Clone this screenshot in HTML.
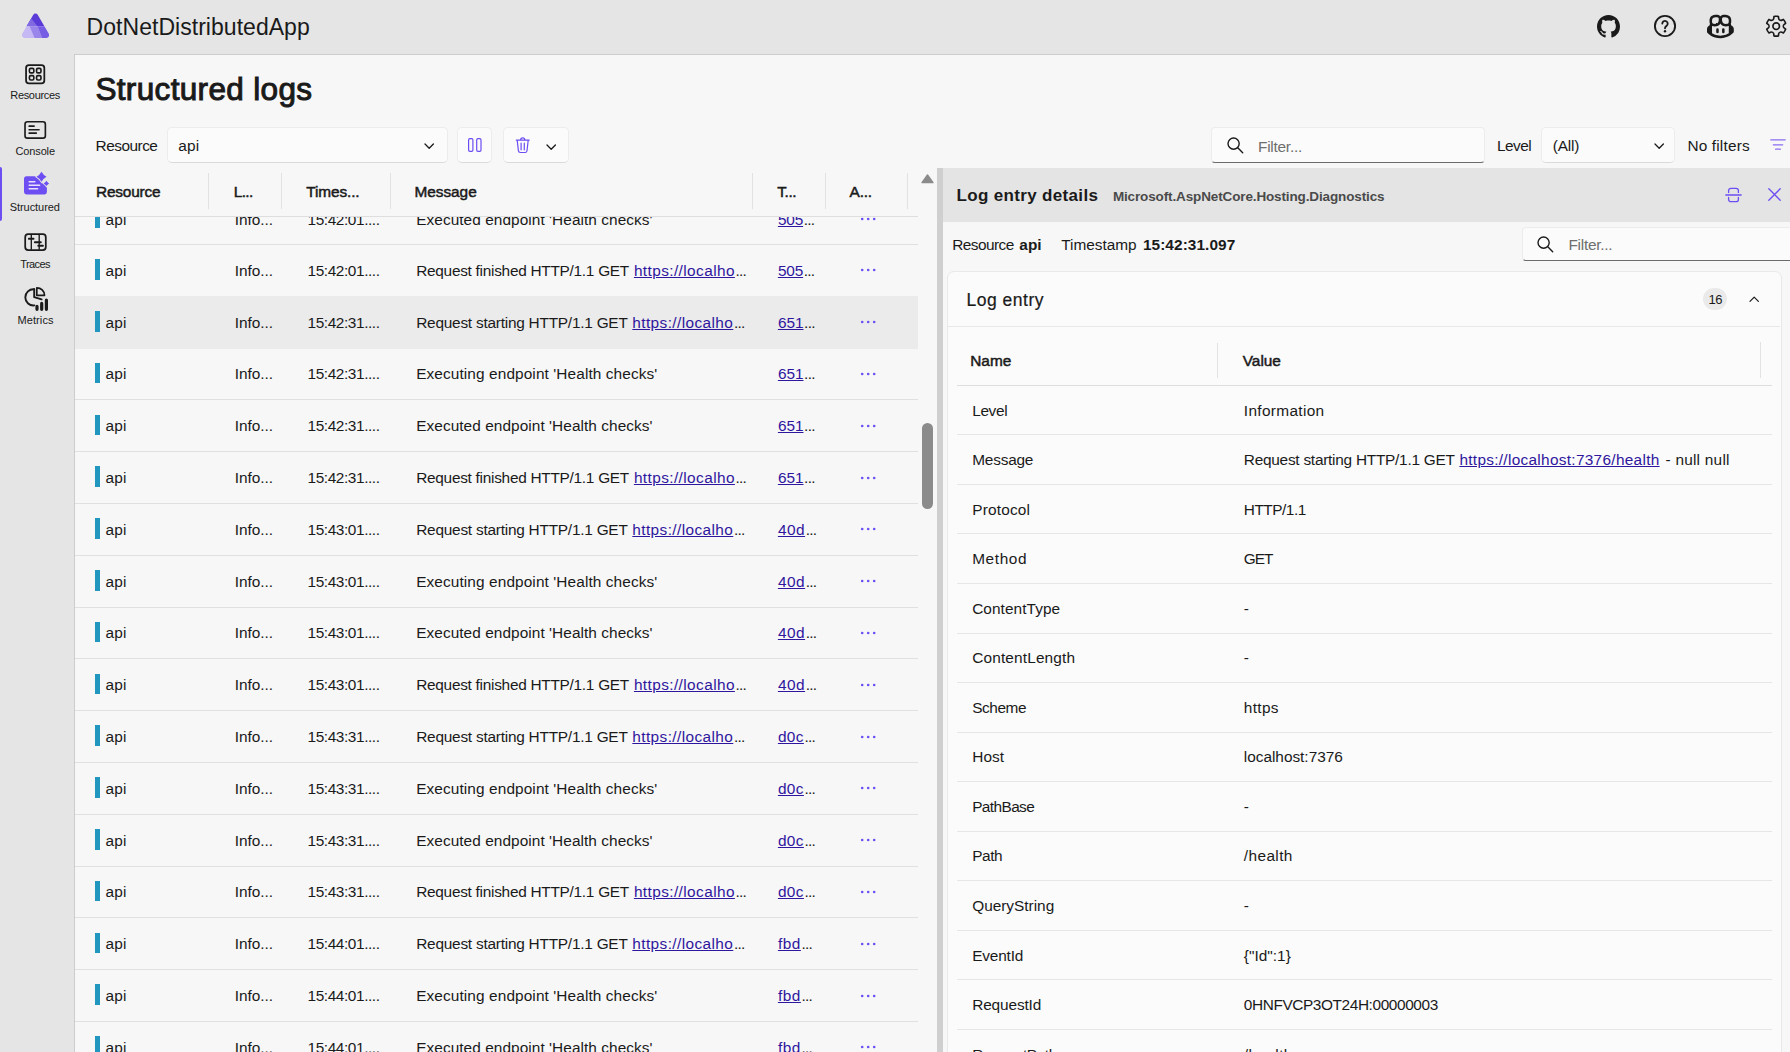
<!DOCTYPE html>
<html lang="en">
<head>
<meta charset="utf-8">
<title>DotNetDistributedApp - Structured logs</title>
<style>
html,body{margin:0;padding:0}
body{width:1790px;height:1052px;overflow:hidden;position:relative;background:#e5e5e5;font-family:"Liberation Sans",sans-serif;color:#1a1a1a}
div,svg,span.t{position:absolute;box-sizing:border-box}
header,nav,main,section,aside{display:block;margin:0;padding:0}
svg{overflow:visible}
.t{white-space:pre;line-height:20px;transform-origin:0 50%}
a{color:#2f169e;text-decoration:underline}
.hl{border-bottom:1px solid #e0e0e0}
.in{background:#fbfbfb;border:1px solid #ececec;border-bottom-color:#dadada;border-radius:5px}
.inb{border-bottom:1px solid #6b6b6b;border-radius:4px}
</style>
</head>
<body>
<header>
<svg style="left:15px;top:8px;" width="40" height="36" viewBox="0 0 40 36"><defs><clipPath id="lg"><path d="M18.16 6.95A2.7 2.7 0 0 1 22.84 6.95L33.76 25.85A2.7 2.7 0 0 1 31.42 29.90L9.58 29.90A2.7 2.7 0 0 1 7.24 25.85Z"/></clipPath></defs><g clip-path="url(#lg)"><rect x="0" y="0" width="40" height="18.2" fill="#5a3bd8"/><polygon points="0,18.2 0,11.3 16.9,11.3 22.5,18.2" fill="#8169e1"/><rect x="0" y="18.2" width="40" height="14" fill="#c5b8f4"/><polygon points="14.6,18.2 22.5,18.2 27.2,29.9 27.2,32 19.6,32 19.6,29.9" fill="#9a86ea"/><polygon points="22.5,18.2 40,18.2 40,32 27.2,32 27.2,29.9" fill="#775de3"/></g></svg>
<span class="t" style="left:86.6px;top:12.0px;font-size:23px;letter-spacing:0.037px;line-height:30px;">DotNetDistributedApp</span>
<svg style="left:1597.3px;top:15.1px;" width="23" height="23" viewBox="0 0 16 16"><path fill="#1a1a1a" d="M8 0C3.58 0 0 3.58 0 8c0 3.54 2.29 6.53 5.47 7.59.4.07.55-.17.55-.38 0-.19-.01-.82-.01-1.49-2.01.37-2.53-.49-2.69-.94-.09-.23-.48-.94-.82-1.13-.28-.15-.68-.52-.01-.53.63-.01 1.08.58 1.23.82.72 1.21 1.87.87 2.33.66.07-.52.28-.87.51-1.07-1.78-.2-3.64-.89-3.64-3.95 0-.87.31-1.59.82-2.15-.08-.2-.36-1.02.08-2.12 0 0 .67-.21 2.2.82.64-.18 1.32-.27 2-.27.68 0 1.36.09 2 .27 1.53-1.04 2.2-.82 2.2-.82.44 1.1.16 1.92.08 2.12.51.56.82 1.27.82 2.15 0 3.07-1.87 3.75-3.65 3.95.29.25.54.73.54 1.48 0 1.07-.01 1.93-.01 2.2 0 .21.15.46.55.38A8.013 8.013 0 0016 8c0-4.42-3.58-8-8-8z"/></svg>
<svg style="left:1652.5px;top:14px;" width="24" height="24" viewBox="0 0 24 24"><circle cx="12" cy="12" r="10.1" fill="none" stroke="#1a1a1a" stroke-width="1.9"/><path d="M9.3 9.6a2.7 2.7 0 1 1 4.3 2.2c-.9.7-1.6 1.3-1.6 2.5" fill="none" stroke="#1a1a1a" stroke-width="1.85" stroke-linecap="round"/><circle cx="12" cy="17.3" r="1.2" fill="#1a1a1a"/></svg>
<svg style="left:1707px;top:13.2px;" width="26.8" height="26.8" viewBox="0 0 16 16"><path fill="#1a1a1a" d="M7.998 15.035c-4.562 0-7.873-2.914-7.998-3.749V9.338c.085-.628.677-1.686 1.588-2.065.013-.07.024-.143.036-.218.029-.183.06-.384.126-.612-.201-.508-.254-1.084-.254-1.656 0-.87.128-1.769.693-2.484.579-.733 1.494-1.124 2.724-1.261 1.206-.134 2.262.034 2.944.765.05.053.096.108.139.165.044-.057.094-.112.143-.165.682-.731 1.738-.899 2.944-.765 1.23.137 2.145.528 2.724 1.261.566.715.693 1.614.693 2.484 0 .572-.053 1.148-.254 1.656.066.228.098.429.126.612.012.076.024.148.037.218.924.385 1.522 1.471 1.591 2.095v1.872c0 .766-3.351 3.795-8.002 3.795Zm0-1.485c2.28 0 4.584-1.11 5.002-1.433V7.862l-.023-.116c-.49.21-1.075.291-1.727.291-1.146 0-2.059-.327-2.71-.991A3.222 3.222 0 0 1 8 6.303a3.24 3.24 0 0 1-.544.743c-.65.664-1.563.991-2.71.991-.652 0-1.236-.081-1.727-.291l-.023.116v4.255c.419.323 2.722 1.433 5.002 1.433ZM6.762 2.83c-.193-.206-.637-.413-1.682-.297-1.019.113-1.479.404-1.713.7-.247.312-.369.789-.369 1.554 0 .793.129 1.171.308 1.371.162.181.519.379 1.442.379.853 0 1.339-.235 1.638-.54.315-.322.527-.827.617-1.553.117-.935-.037-1.395-.241-1.614Zm4.155-.297c-1.044-.116-1.488.091-1.681.297-.204.219-.359.679-.242 1.614.091.726.303 1.231.618 1.553.299.305.784.54 1.638.54.922 0 1.28-.198 1.442-.379.179-.2.308-.578.308-1.371 0-.765-.123-1.242-.37-1.554-.233-.296-.693-.587-1.713-.7Z"/><path fill="#1a1a1a" d="M6.25 9.037a.75.75 0 0 1 .75.75v1.501a.75.75 0 0 1-1.5 0V9.787a.75.75 0 0 1 .75-.75Zm4.25.75v1.501a.75.75 0 0 1-1.5 0V9.787a.75.75 0 0 1 1.5 0Z"/></svg>
<svg style="left:1763.3px;top:13.1px;" width="26.4" height="26.4" viewBox="0 0 24 24"><path fill="#1a1a1a" d="M12.01 2.25c.74 0 1.47.1 2.18.25.32.07.55.33.59.65l.17 1.53a1.38 1.38 0 0 0 1.92 1.11l1.4-.61a.75.75 0 0 1 .85.17 9.8 9.8 0 0 1 2.2 3.8c.1.3-.01.64-.27.83l-1.24.92a1.38 1.38 0 0 0 0 2.22l1.24.92c.26.19.37.52.27.83a9.8 9.8 0 0 1-2.2 3.8.75.75 0 0 1-.85.17l-1.4-.62a1.38 1.38 0 0 0-1.93 1.12l-.17 1.52a.75.75 0 0 1-.57.65 9.52 9.52 0 0 1-4.4 0 .75.75 0 0 1-.57-.65l-.17-1.52a1.38 1.38 0 0 0-1.93-1.11l-1.4.62a.75.75 0 0 1-.85-.18 9.8 9.8 0 0 1-2.2-3.8c-.1-.3.01-.64.27-.83l1.24-.92a1.38 1.38 0 0 0 0-2.22l-1.24-.92a.75.75 0 0 1-.28-.83 9.8 9.8 0 0 1 2.2-3.8.75.75 0 0 1 .85-.17l1.4.62a1.38 1.38 0 0 0 1.93-1.12l.17-1.53a.75.75 0 0 1 .58-.65c.72-.16 1.45-.24 2.2-.25Zm0 1.5c-.45 0-.9.04-1.35.12l-.11.98a2.88 2.88 0 0 1-4.02 2.33l-.9-.4A8.3 8.3 0 0 0 4.28 9.1l.8.59a2.88 2.88 0 0 1 0 4.64l-.8.59c.3.84.76 1.63 1.34 2.32l.91-.4a2.88 2.88 0 0 1 4.01 2.32l.11.99c.89.15 1.8.15 2.68 0l.11-.99a2.88 2.88 0 0 1 4.02-2.32l.9.4a8.3 8.3 0 0 0 1.35-2.32l-.8-.6a2.88 2.88 0 0 1 0-4.63l.8-.59a8.3 8.3 0 0 0-1.35-2.32l-.9.4a2.88 2.88 0 0 1-4.02-2.33l-.11-.98c-.44-.08-.88-.12-1.32-.12ZM12 8.25a3.75 3.75 0 1 1 0 7.5 3.75 3.75 0 0 1 0-7.5Zm0 1.5a2.25 2.25 0 1 0 0 4.5 2.25 2.25 0 0 0 0-4.5Z"/></svg>
</header>
<nav>
<svg style="left:22.3px;top:60.55px;" width="26.4" height="26.4" viewBox="0 0 24 24"><rect x="3.7" y="3.7" width="16.6" height="16.6" rx="2.6" fill="none" stroke="#1a1a1a" stroke-width="1.6"/><rect x="6.75" y="6.75" width="4" height="4" rx="1.25" fill="none" stroke="#1a1a1a" stroke-width="1.5"/><rect x="6.75" y="13.25" width="4" height="4" rx="1.25" fill="none" stroke="#1a1a1a" stroke-width="1.5"/><rect x="13.25" y="6.75" width="4" height="4" rx="1.25" fill="none" stroke="#1a1a1a" stroke-width="1.5"/><rect x="13.25" y="13.25" width="4" height="4" rx="1.25" fill="none" stroke="#1a1a1a" stroke-width="1.5"/></svg>
<span class="t" style="left:10.3px;top:84.5px;font-size:11px;letter-spacing:-0.331px;">Resources</span>
<svg style="left:22.4px;top:116.6px;" width="26.4" height="26.4" viewBox="0 0 24 24"><rect x="2.75" y="4.35" width="18.5" height="14.9" rx="2.2" fill="none" stroke="#1a1a1a" stroke-width="1.5"/><path d="M6.5 8.3h4.5M6.5 11.55h9M6.5 14.7h6.5" fill="none" stroke="#1a1a1a" stroke-width="1.5" stroke-linecap="round"/></svg>
<span class="t" style="left:15.5px;top:140.7px;font-size:11px;letter-spacing:-0.137px;">Console</span>
<div style="left:0px;top:167px;width:2.4px;height:54px;background:#6d4ef2;border-radius:0 2px 2px 0"></div>
<svg style="left:20px;top:168px;" width="32" height="32" viewBox="0 0 32 32"><path d="M6.5 8.2H15.6L26.9 19.6V24.0Q26.9 26.4 24.5 26.4H6.5Q4.0 26.4 4.0 24.0V10.7Q4.0 8.2 6.5 8.2Z" fill="#6d4ef2"/><path d="M21.50 3.80Q23.25 7.05 26.50 8.80Q23.25 10.55 21.50 13.80Q19.75 10.55 16.50 8.80Q19.75 7.05 21.50 3.80Z" fill="#6d4ef2" stroke="#e5e5e5" stroke-width="1.6" paint-order="stroke"/><path d="M26.40 12.70Q27.34 14.46 29.10 15.40Q27.34 16.34 26.40 18.10Q25.45 16.34 23.70 15.40Q25.45 14.46 26.40 12.70Z" fill="#6d4ef2" stroke="#e5e5e5" stroke-width="1.4" paint-order="stroke"/><path d="M9.2 13.7h5.6M9.2 17.3h10.4M9.2 20.7h8.4" stroke="#e8e2ff" stroke-width="1.5" stroke-linecap="round" fill="none"/></svg>
<span class="t" style="left:9.7px;top:196.7px;font-size:11px;letter-spacing:-0.055px;">Structured</span>
<svg style="left:20px;top:228px;" width="32" height="28" viewBox="0 0 32 28"><rect x="5.2" y="6.2" width="20.6" height="15.8" rx="3" fill="none" stroke="#1a1a1a" stroke-width="1.75"/><path d="M11.3 6.5v15.2M19.2 6.5v15.2" stroke="#1a1a1a" stroke-width="1.35" fill="none"/><path d="M8.9 10.8h4.6M14.9 14.3h5.9M18.3 17.8h4.6" stroke="#1a1a1a" stroke-width="2" stroke-linecap="round" fill="none"/><path d="M8.9 10.8h4.6M14.9 14.3h5.9M18.3 17.8h4.6" stroke="#e5e5e5" stroke-width="3.6" stroke-linecap="butt" fill="none" opacity="0"/></svg>
<span class="t" style="left:20.3px;top:253.8px;font-size:11px;letter-spacing:-0.603px;">Traces</span>
<svg style="left:20px;top:284px;" width="32" height="30" viewBox="0 0 32 30"><path d="M14.2 5.3A8.1 8.1 0 1 0 14.4 21.4" fill="none" stroke="#1a1a1a" stroke-width="1.9" stroke-linecap="round"/><path d="M14.2 5.3V13.2L21.6 15.4" fill="none" stroke="#1a1a1a" stroke-width="1.9" stroke-linecap="round" stroke-linejoin="round"/><path d="M16.8 3.8A7.6 7.6 0 0 1 24.5 11.3H16.8Z" fill="none" stroke="#1a1a1a" stroke-width="1.7" stroke-linejoin="round"/><path d="M17.0 22.4v2.9M21.7 19.4v5.9M26.4 16.0v9.3" fill="none" stroke="#1a1a1a" stroke-width="3.2" stroke-linecap="round"/></svg>
<span class="t" style="left:17.5px;top:309.9px;font-size:11px;letter-spacing:0.092px;">Metrics</span>
</nav>
<main>
<div style="left:74px;top:54px;width:1716px;height:998px;background:#f7f7f7;border-left:1px solid #cdcdcd;border-top:1px solid #cdcdcd"></div>
<section class="toolbar">
<span class="t" style="left:95.4px;top:68.6px;font-size:31.5px;-webkit-text-stroke:1.01px;letter-spacing:0.343px;line-height:40px;">Structured logs</span>
<span class="t" style="left:95.6px;top:136.0px;font-size:15.4px;letter-spacing:-0.509px;">Resource</span>
<div class="in" style="left:167.3px;top:127.3px;width:280.3px;height:35.3px;"></div>
<span class="t" style="left:178.3px;top:136.0px;font-size:15.4px;letter-spacing:0.218px;">api</span>
<svg style="left:424.4px;top:143.4px;" width="10.4" height="6.4" viewBox="0 0 10.4 6.4"><path d="M1 1l4.2 4.2L9.4 1" fill="none" stroke="#1a1a1a" stroke-width="1.3" stroke-linecap="round" stroke-linejoin="round"/></svg>
<div class="in" style="left:457.3px;top:127.3px;width:35px;height:35.3px;"></div>
<svg style="left:468.2px;top:137.9px;" width="14" height="14" viewBox="0 0 14 14"><rect x="0.6" y="0.6" width="4.3" height="12.7" rx="1.3" fill="none" stroke="#6d4ef2" stroke-width="1.2"/><rect x="8.7" y="0.6" width="4.3" height="12.7" rx="1.3" fill="none" stroke="#6d4ef2" stroke-width="1.2"/></svg>
<div class="in" style="left:502.6px;top:127.3px;width:66.9px;height:35.3px;"></div>
<svg style="left:515.3px;top:136.9px;" width="15.4" height="16.4" viewBox="0 0 15.4 16.4"><path d="M1.3 3.1h12.9M5.6 3.0a2.1 2.1 0 0 1 4.2 0M2.2 3.3l1.2 10.4a2 2 0 0 0 2 1.8h4.6a2 2 0 0 0 2-1.8l1.2-10.4M6.1 6.2v6.6M9.3 6.2v6.6" fill="none" stroke="#6d4ef2" stroke-width="1.2" stroke-linecap="round" stroke-linejoin="round"/></svg>
<svg style="left:546.4px;top:143.6px;" width="10.4" height="6.4" viewBox="0 0 10.4 6.4"><path d="M1 1l4.2 4.2L9.4 1" fill="none" stroke="#1a1a1a" stroke-width="1.3" stroke-linecap="round" stroke-linejoin="round"/></svg>
<div class="in inb" style="left:1211.4px;top:127.2px;width:273.6px;height:35.4px;"></div>
<svg style="left:1226.8px;top:137px;" width="16.4" height="16.4" viewBox="0 0 16.4 16.4"><circle cx="6.6" cy="6.6" r="5.6" fill="none" stroke="#1a1a1a" stroke-width="1.4"/><path d="M10.8 10.8l4.9 4.9" stroke="#1a1a1a" stroke-width="1.4" stroke-linecap="round"/></svg>
<span class="t" style="left:1258px;top:136.8px;font-size:15.4px;color:#6e6e6e;letter-spacing:-0.243px;">Filter...</span>
<span class="t" style="left:1497px;top:136.1px;font-size:15.4px;letter-spacing:-0.559px;">Level</span>
<div class="in" style="left:1541.4px;top:127.3px;width:134px;height:35.3px;"></div>
<span class="t" style="left:1552.8px;top:136.1px;font-size:15.4px;letter-spacing:-0.172px;">(All)</span>
<svg style="left:1653.5px;top:143.4px;" width="10.4" height="6.4" viewBox="0 0 10.4 6.4"><path d="M1 1l4.2 4.2L9.4 1" fill="none" stroke="#1a1a1a" stroke-width="1.3" stroke-linecap="round" stroke-linejoin="round"/></svg>
<span class="t" style="left:1687.4px;top:136.1px;font-size:15.4px;letter-spacing:0.167px;">No filters</span>
<svg style="left:1770.2px;top:139.2px;" width="16" height="12" viewBox="0 0 16 12"><path d="M0.8 0.8h14.4M3.3 5.8h9.4M5.6 10.2h4.8" stroke="#8a6df2" stroke-width="1.3" stroke-linecap="round" fill="none"/></svg>
</section>
<section class="grid">
<section class="row">
<div class="hl" style="left:75px;top:193.15px;width:843px;height:51.8px;"></div>
<div style="left:95px;top:207.35px;width:4.9px;height:20.7px;background:#2196bf"></div>
<span class="t" style="left:105.5px;top:209.95px;font-size:15.4px;letter-spacing:0.151px;">api</span>
<span class="t" style="left:234.8px;top:209.95px;font-size:15.4px;letter-spacing:-0.057px;">Info...</span>
<span class="t" style="left:307.5px;top:209.95px;font-size:15.4px;letter-spacing:-0.410px;">15:42:01....</span>
<span class="t" style="left:416.2px;top:209.95px;font-size:15.4px;letter-spacing:0.063px;">Executed endpoint 'Health checks'</span>
<span class="t" style="left:777.9px;top:209.95px;font-size:15.4px;letter-spacing:-0.163px;"><a>505</a></span>
<span class="t" style="left:803.7px;top:209.95px;font-size:15.4px;letter-spacing:-0.743px;">...</span>
<svg style="left:860px;top:216.55px;" width="16" height="4" viewBox="0 0 16 4"><circle cx="2.2" cy="2" r="1.3" fill="#6d4ef2"/><circle cx="8.2" cy="2" r="1.3" fill="#6d4ef2"/><circle cx="14.2" cy="2" r="1.3" fill="#6d4ef2"/></svg>
</section>
<section class="row">
<div class="hl" style="left:75px;top:244.95px;width:843px;height:51.8px;"></div>
<div style="left:95px;top:259.15px;width:4.9px;height:20.7px;background:#2196bf"></div>
<span class="t" style="left:105.5px;top:260.85px;font-size:15.4px;letter-spacing:0.151px;">api</span>
<span class="t" style="left:234.8px;top:260.85px;font-size:15.4px;letter-spacing:-0.057px;">Info...</span>
<span class="t" style="left:307.5px;top:260.85px;font-size:15.4px;letter-spacing:-0.410px;">15:42:01....</span>
<span class="t" style="left:416.2px;top:260.85px;font-size:15.4px;letter-spacing:-0.273px;">Request finished HTTP/1.1 GET</span>
<span class="t" style="left:633.9px;top:260.85px;font-size:15.4px;letter-spacing:0.402px;"><a>https://localho</a></span>
<span class="t" style="left:735.5px;top:260.85px;font-size:15.4px;letter-spacing:-0.743px;">...</span>
<span class="t" style="left:777.9px;top:260.85px;font-size:15.4px;letter-spacing:-0.163px;"><a>505</a></span>
<span class="t" style="left:803.7px;top:260.85px;font-size:15.4px;letter-spacing:-0.743px;">...</span>
<svg style="left:860px;top:268.35px;" width="16" height="4" viewBox="0 0 16 4"><circle cx="2.2" cy="2" r="1.3" fill="#6d4ef2"/><circle cx="8.2" cy="2" r="1.3" fill="#6d4ef2"/><circle cx="14.2" cy="2" r="1.3" fill="#6d4ef2"/></svg>
</section>
<section class="row">
<div style="left:75px;top:296px;width:843px;height:52.8px;background:#ebebeb"></div>
<div style="left:95px;top:310.95px;width:4.9px;height:20.7px;background:#2196bf"></div>
<span class="t" style="left:105.5px;top:312.65px;font-size:15.4px;letter-spacing:0.151px;">api</span>
<span class="t" style="left:234.8px;top:312.65px;font-size:15.4px;letter-spacing:-0.057px;">Info...</span>
<span class="t" style="left:307.5px;top:312.65px;font-size:15.4px;letter-spacing:-0.410px;">15:42:31....</span>
<span class="t" style="left:416.2px;top:312.65px;font-size:15.4px;letter-spacing:-0.232px;">Request starting HTTP/1.1 GET</span>
<span class="t" style="left:632.3px;top:312.65px;font-size:15.4px;letter-spacing:0.402px;"><a>https://localho</a></span>
<span class="t" style="left:733.9px;top:312.65px;font-size:15.4px;letter-spacing:-0.743px;">...</span>
<span class="t" style="left:777.9px;top:312.65px;font-size:15.4px;letter-spacing:-0.029px;"><a>651</a></span>
<span class="t" style="left:804.1px;top:312.65px;font-size:15.4px;letter-spacing:-0.743px;">...</span>
<svg style="left:860px;top:320.15px;" width="16" height="4" viewBox="0 0 16 4"><circle cx="2.2" cy="2" r="1.3" fill="#6d4ef2"/><circle cx="8.2" cy="2" r="1.3" fill="#6d4ef2"/><circle cx="14.2" cy="2" r="1.3" fill="#6d4ef2"/></svg>
</section>
<section class="row">
<div class="hl" style="left:75px;top:348.55px;width:843px;height:51.8px;"></div>
<div style="left:95px;top:362.75px;width:4.9px;height:20.7px;background:#2196bf"></div>
<span class="t" style="left:105.5px;top:364.45px;font-size:15.4px;letter-spacing:0.151px;">api</span>
<span class="t" style="left:234.8px;top:364.45px;font-size:15.4px;letter-spacing:-0.057px;">Info...</span>
<span class="t" style="left:307.5px;top:364.45px;font-size:15.4px;letter-spacing:-0.410px;">15:42:31....</span>
<span class="t" style="left:416.2px;top:364.45px;font-size:15.4px;letter-spacing:0.101px;">Executing endpoint 'Health checks'</span>
<span class="t" style="left:777.9px;top:364.45px;font-size:15.4px;letter-spacing:-0.029px;"><a>651</a></span>
<span class="t" style="left:804.1px;top:364.45px;font-size:15.4px;letter-spacing:-0.743px;">...</span>
<svg style="left:860px;top:371.95px;" width="16" height="4" viewBox="0 0 16 4"><circle cx="2.2" cy="2" r="1.3" fill="#6d4ef2"/><circle cx="8.2" cy="2" r="1.3" fill="#6d4ef2"/><circle cx="14.2" cy="2" r="1.3" fill="#6d4ef2"/></svg>
</section>
<section class="row">
<div class="hl" style="left:75px;top:400.35px;width:843px;height:51.8px;"></div>
<div style="left:95px;top:414.55px;width:4.9px;height:20.7px;background:#2196bf"></div>
<span class="t" style="left:105.5px;top:416.25px;font-size:15.4px;letter-spacing:0.151px;">api</span>
<span class="t" style="left:234.8px;top:416.25px;font-size:15.4px;letter-spacing:-0.057px;">Info...</span>
<span class="t" style="left:307.5px;top:416.25px;font-size:15.4px;letter-spacing:-0.410px;">15:42:31....</span>
<span class="t" style="left:416.2px;top:416.25px;font-size:15.4px;letter-spacing:0.063px;">Executed endpoint 'Health checks'</span>
<span class="t" style="left:777.9px;top:416.25px;font-size:15.4px;letter-spacing:-0.029px;"><a>651</a></span>
<span class="t" style="left:804.1px;top:416.25px;font-size:15.4px;letter-spacing:-0.743px;">...</span>
<svg style="left:860px;top:423.75px;" width="16" height="4" viewBox="0 0 16 4"><circle cx="2.2" cy="2" r="1.3" fill="#6d4ef2"/><circle cx="8.2" cy="2" r="1.3" fill="#6d4ef2"/><circle cx="14.2" cy="2" r="1.3" fill="#6d4ef2"/></svg>
</section>
<section class="row">
<div class="hl" style="left:75px;top:452.15px;width:843px;height:51.8px;"></div>
<div style="left:95px;top:466.35px;width:4.9px;height:20.7px;background:#2196bf"></div>
<span class="t" style="left:105.5px;top:468.05px;font-size:15.4px;letter-spacing:0.151px;">api</span>
<span class="t" style="left:234.8px;top:468.05px;font-size:15.4px;letter-spacing:-0.057px;">Info...</span>
<span class="t" style="left:307.5px;top:468.05px;font-size:15.4px;letter-spacing:-0.410px;">15:42:31....</span>
<span class="t" style="left:416.2px;top:468.05px;font-size:15.4px;letter-spacing:-0.273px;">Request finished HTTP/1.1 GET</span>
<span class="t" style="left:633.9px;top:468.05px;font-size:15.4px;letter-spacing:0.402px;"><a>https://localho</a></span>
<span class="t" style="left:735.5px;top:468.05px;font-size:15.4px;letter-spacing:-0.743px;">...</span>
<span class="t" style="left:777.9px;top:468.05px;font-size:15.4px;letter-spacing:-0.029px;"><a>651</a></span>
<span class="t" style="left:804.1px;top:468.05px;font-size:15.4px;letter-spacing:-0.743px;">...</span>
<svg style="left:860px;top:475.55px;" width="16" height="4" viewBox="0 0 16 4"><circle cx="2.2" cy="2" r="1.3" fill="#6d4ef2"/><circle cx="8.2" cy="2" r="1.3" fill="#6d4ef2"/><circle cx="14.2" cy="2" r="1.3" fill="#6d4ef2"/></svg>
</section>
<section class="row">
<div class="hl" style="left:75px;top:503.95px;width:843px;height:51.8px;"></div>
<div style="left:95px;top:518.15px;width:4.9px;height:20.7px;background:#2196bf"></div>
<span class="t" style="left:105.5px;top:519.85px;font-size:15.4px;letter-spacing:0.151px;">api</span>
<span class="t" style="left:234.8px;top:519.85px;font-size:15.4px;letter-spacing:-0.057px;">Info...</span>
<span class="t" style="left:307.5px;top:519.85px;font-size:15.4px;letter-spacing:-0.410px;">15:43:01....</span>
<span class="t" style="left:416.2px;top:519.85px;font-size:15.4px;letter-spacing:-0.232px;">Request starting HTTP/1.1 GET</span>
<span class="t" style="left:632.3px;top:519.85px;font-size:15.4px;letter-spacing:0.402px;"><a>https://localho</a></span>
<span class="t" style="left:733.9px;top:519.85px;font-size:15.4px;letter-spacing:-0.743px;">...</span>
<span class="t" style="left:777.9px;top:519.85px;font-size:15.4px;letter-spacing:0.504px;"><a>40d</a></span>
<span class="t" style="left:805.7px;top:519.85px;font-size:15.4px;letter-spacing:-0.743px;">...</span>
<svg style="left:860px;top:527.35px;" width="16" height="4" viewBox="0 0 16 4"><circle cx="2.2" cy="2" r="1.3" fill="#6d4ef2"/><circle cx="8.2" cy="2" r="1.3" fill="#6d4ef2"/><circle cx="14.2" cy="2" r="1.3" fill="#6d4ef2"/></svg>
</section>
<section class="row">
<div class="hl" style="left:75px;top:555.75px;width:843px;height:51.8px;"></div>
<div style="left:95px;top:569.95px;width:4.9px;height:20.7px;background:#2196bf"></div>
<span class="t" style="left:105.5px;top:571.65px;font-size:15.4px;letter-spacing:0.151px;">api</span>
<span class="t" style="left:234.8px;top:571.65px;font-size:15.4px;letter-spacing:-0.057px;">Info...</span>
<span class="t" style="left:307.5px;top:571.65px;font-size:15.4px;letter-spacing:-0.410px;">15:43:01....</span>
<span class="t" style="left:416.2px;top:571.65px;font-size:15.4px;letter-spacing:0.101px;">Executing endpoint 'Health checks'</span>
<span class="t" style="left:777.9px;top:571.65px;font-size:15.4px;letter-spacing:0.504px;"><a>40d</a></span>
<span class="t" style="left:805.7px;top:571.65px;font-size:15.4px;letter-spacing:-0.743px;">...</span>
<svg style="left:860px;top:579.15px;" width="16" height="4" viewBox="0 0 16 4"><circle cx="2.2" cy="2" r="1.3" fill="#6d4ef2"/><circle cx="8.2" cy="2" r="1.3" fill="#6d4ef2"/><circle cx="14.2" cy="2" r="1.3" fill="#6d4ef2"/></svg>
</section>
<section class="row">
<div class="hl" style="left:75px;top:607.55px;width:843px;height:51.8px;"></div>
<div style="left:95px;top:621.75px;width:4.9px;height:20.7px;background:#2196bf"></div>
<span class="t" style="left:105.5px;top:623.45px;font-size:15.4px;letter-spacing:0.151px;">api</span>
<span class="t" style="left:234.8px;top:623.45px;font-size:15.4px;letter-spacing:-0.057px;">Info...</span>
<span class="t" style="left:307.5px;top:623.45px;font-size:15.4px;letter-spacing:-0.410px;">15:43:01....</span>
<span class="t" style="left:416.2px;top:623.45px;font-size:15.4px;letter-spacing:0.063px;">Executed endpoint 'Health checks'</span>
<span class="t" style="left:777.9px;top:623.45px;font-size:15.4px;letter-spacing:0.504px;"><a>40d</a></span>
<span class="t" style="left:805.7px;top:623.45px;font-size:15.4px;letter-spacing:-0.743px;">...</span>
<svg style="left:860px;top:630.95px;" width="16" height="4" viewBox="0 0 16 4"><circle cx="2.2" cy="2" r="1.3" fill="#6d4ef2"/><circle cx="8.2" cy="2" r="1.3" fill="#6d4ef2"/><circle cx="14.2" cy="2" r="1.3" fill="#6d4ef2"/></svg>
</section>
<section class="row">
<div class="hl" style="left:75px;top:659.35px;width:843px;height:51.8px;"></div>
<div style="left:95px;top:673.55px;width:4.9px;height:20.7px;background:#2196bf"></div>
<span class="t" style="left:105.5px;top:675.25px;font-size:15.4px;letter-spacing:0.151px;">api</span>
<span class="t" style="left:234.8px;top:675.25px;font-size:15.4px;letter-spacing:-0.057px;">Info...</span>
<span class="t" style="left:307.5px;top:675.25px;font-size:15.4px;letter-spacing:-0.410px;">15:43:01....</span>
<span class="t" style="left:416.2px;top:675.25px;font-size:15.4px;letter-spacing:-0.273px;">Request finished HTTP/1.1 GET</span>
<span class="t" style="left:633.9px;top:675.25px;font-size:15.4px;letter-spacing:0.402px;"><a>https://localho</a></span>
<span class="t" style="left:735.5px;top:675.25px;font-size:15.4px;letter-spacing:-0.743px;">...</span>
<span class="t" style="left:777.9px;top:675.25px;font-size:15.4px;letter-spacing:0.504px;"><a>40d</a></span>
<span class="t" style="left:805.7px;top:675.25px;font-size:15.4px;letter-spacing:-0.743px;">...</span>
<svg style="left:860px;top:682.75px;" width="16" height="4" viewBox="0 0 16 4"><circle cx="2.2" cy="2" r="1.3" fill="#6d4ef2"/><circle cx="8.2" cy="2" r="1.3" fill="#6d4ef2"/><circle cx="14.2" cy="2" r="1.3" fill="#6d4ef2"/></svg>
</section>
<section class="row">
<div class="hl" style="left:75px;top:711.15px;width:843px;height:51.8px;"></div>
<div style="left:95px;top:725.35px;width:4.9px;height:20.7px;background:#2196bf"></div>
<span class="t" style="left:105.5px;top:727.05px;font-size:15.4px;letter-spacing:0.151px;">api</span>
<span class="t" style="left:234.8px;top:727.05px;font-size:15.4px;letter-spacing:-0.057px;">Info...</span>
<span class="t" style="left:307.5px;top:727.05px;font-size:15.4px;letter-spacing:-0.410px;">15:43:31....</span>
<span class="t" style="left:416.2px;top:727.05px;font-size:15.4px;letter-spacing:-0.232px;">Request starting HTTP/1.1 GET</span>
<span class="t" style="left:632.3px;top:727.05px;font-size:15.4px;letter-spacing:0.402px;"><a>https://localho</a></span>
<span class="t" style="left:733.9px;top:727.05px;font-size:15.4px;letter-spacing:-0.743px;">...</span>
<span class="t" style="left:777.9px;top:727.05px;font-size:15.4px;letter-spacing:0.391px;"><a>d0c</a></span>
<span class="t" style="left:804.5px;top:727.05px;font-size:15.4px;letter-spacing:-0.743px;">...</span>
<svg style="left:860px;top:734.55px;" width="16" height="4" viewBox="0 0 16 4"><circle cx="2.2" cy="2" r="1.3" fill="#6d4ef2"/><circle cx="8.2" cy="2" r="1.3" fill="#6d4ef2"/><circle cx="14.2" cy="2" r="1.3" fill="#6d4ef2"/></svg>
</section>
<section class="row">
<div class="hl" style="left:75px;top:762.95px;width:843px;height:51.8px;"></div>
<div style="left:95px;top:777.15px;width:4.9px;height:20.7px;background:#2196bf"></div>
<span class="t" style="left:105.5px;top:778.85px;font-size:15.4px;letter-spacing:0.151px;">api</span>
<span class="t" style="left:234.8px;top:778.85px;font-size:15.4px;letter-spacing:-0.057px;">Info...</span>
<span class="t" style="left:307.5px;top:778.85px;font-size:15.4px;letter-spacing:-0.410px;">15:43:31....</span>
<span class="t" style="left:416.2px;top:778.85px;font-size:15.4px;letter-spacing:0.101px;">Executing endpoint 'Health checks'</span>
<span class="t" style="left:777.9px;top:778.85px;font-size:15.4px;letter-spacing:0.391px;"><a>d0c</a></span>
<span class="t" style="left:804.5px;top:778.85px;font-size:15.4px;letter-spacing:-0.743px;">...</span>
<svg style="left:860px;top:786.35px;" width="16" height="4" viewBox="0 0 16 4"><circle cx="2.2" cy="2" r="1.3" fill="#6d4ef2"/><circle cx="8.2" cy="2" r="1.3" fill="#6d4ef2"/><circle cx="14.2" cy="2" r="1.3" fill="#6d4ef2"/></svg>
</section>
<section class="row">
<div class="hl" style="left:75px;top:814.75px;width:843px;height:51.8px;"></div>
<div style="left:95px;top:828.95px;width:4.9px;height:20.7px;background:#2196bf"></div>
<span class="t" style="left:105.5px;top:830.65px;font-size:15.4px;letter-spacing:0.151px;">api</span>
<span class="t" style="left:234.8px;top:830.65px;font-size:15.4px;letter-spacing:-0.057px;">Info...</span>
<span class="t" style="left:307.5px;top:830.65px;font-size:15.4px;letter-spacing:-0.410px;">15:43:31....</span>
<span class="t" style="left:416.2px;top:830.65px;font-size:15.4px;letter-spacing:0.063px;">Executed endpoint 'Health checks'</span>
<span class="t" style="left:777.9px;top:830.65px;font-size:15.4px;letter-spacing:0.391px;"><a>d0c</a></span>
<span class="t" style="left:804.5px;top:830.65px;font-size:15.4px;letter-spacing:-0.743px;">...</span>
<svg style="left:860px;top:838.15px;" width="16" height="4" viewBox="0 0 16 4"><circle cx="2.2" cy="2" r="1.3" fill="#6d4ef2"/><circle cx="8.2" cy="2" r="1.3" fill="#6d4ef2"/><circle cx="14.2" cy="2" r="1.3" fill="#6d4ef2"/></svg>
</section>
<section class="row">
<div class="hl" style="left:75px;top:866.55px;width:843px;height:51.8px;"></div>
<div style="left:95px;top:880.75px;width:4.9px;height:20.7px;background:#2196bf"></div>
<span class="t" style="left:105.5px;top:882.45px;font-size:15.4px;letter-spacing:0.151px;">api</span>
<span class="t" style="left:234.8px;top:882.45px;font-size:15.4px;letter-spacing:-0.057px;">Info...</span>
<span class="t" style="left:307.5px;top:882.45px;font-size:15.4px;letter-spacing:-0.410px;">15:43:31....</span>
<span class="t" style="left:416.2px;top:882.45px;font-size:15.4px;letter-spacing:-0.273px;">Request finished HTTP/1.1 GET</span>
<span class="t" style="left:633.9px;top:882.45px;font-size:15.4px;letter-spacing:0.402px;"><a>https://localho</a></span>
<span class="t" style="left:735.5px;top:882.45px;font-size:15.4px;letter-spacing:-0.743px;">...</span>
<span class="t" style="left:777.9px;top:882.45px;font-size:15.4px;letter-spacing:0.391px;"><a>d0c</a></span>
<span class="t" style="left:804.5px;top:882.45px;font-size:15.4px;letter-spacing:-0.743px;">...</span>
<svg style="left:860px;top:889.95px;" width="16" height="4" viewBox="0 0 16 4"><circle cx="2.2" cy="2" r="1.3" fill="#6d4ef2"/><circle cx="8.2" cy="2" r="1.3" fill="#6d4ef2"/><circle cx="14.2" cy="2" r="1.3" fill="#6d4ef2"/></svg>
</section>
<section class="row">
<div class="hl" style="left:75px;top:918.35px;width:843px;height:51.8px;"></div>
<div style="left:95px;top:932.55px;width:4.9px;height:20.7px;background:#2196bf"></div>
<span class="t" style="left:105.5px;top:934.25px;font-size:15.4px;letter-spacing:0.151px;">api</span>
<span class="t" style="left:234.8px;top:934.25px;font-size:15.4px;letter-spacing:-0.057px;">Info...</span>
<span class="t" style="left:307.5px;top:934.25px;font-size:15.4px;letter-spacing:-0.410px;">15:44:01....</span>
<span class="t" style="left:416.2px;top:934.25px;font-size:15.4px;letter-spacing:-0.232px;">Request starting HTTP/1.1 GET</span>
<span class="t" style="left:632.3px;top:934.25px;font-size:15.4px;letter-spacing:0.402px;"><a>https://localho</a></span>
<span class="t" style="left:733.9px;top:934.25px;font-size:15.4px;letter-spacing:-0.743px;">...</span>
<span class="t" style="left:777.9px;top:934.25px;font-size:15.4px;letter-spacing:0.531px;"><a>fbd</a></span>
<span class="t" style="left:801.5px;top:934.25px;font-size:15.4px;letter-spacing:-0.743px;">...</span>
<svg style="left:860px;top:941.75px;" width="16" height="4" viewBox="0 0 16 4"><circle cx="2.2" cy="2" r="1.3" fill="#6d4ef2"/><circle cx="8.2" cy="2" r="1.3" fill="#6d4ef2"/><circle cx="14.2" cy="2" r="1.3" fill="#6d4ef2"/></svg>
</section>
<section class="row">
<div class="hl" style="left:75px;top:970.15px;width:843px;height:51.8px;"></div>
<div style="left:95px;top:984.35px;width:4.9px;height:20.7px;background:#2196bf"></div>
<span class="t" style="left:105.5px;top:986.05px;font-size:15.4px;letter-spacing:0.151px;">api</span>
<span class="t" style="left:234.8px;top:986.05px;font-size:15.4px;letter-spacing:-0.057px;">Info...</span>
<span class="t" style="left:307.5px;top:986.05px;font-size:15.4px;letter-spacing:-0.410px;">15:44:01....</span>
<span class="t" style="left:416.2px;top:986.05px;font-size:15.4px;letter-spacing:0.101px;">Executing endpoint 'Health checks'</span>
<span class="t" style="left:777.9px;top:986.05px;font-size:15.4px;letter-spacing:0.531px;"><a>fbd</a></span>
<span class="t" style="left:801.5px;top:986.05px;font-size:15.4px;letter-spacing:-0.743px;">...</span>
<svg style="left:860px;top:993.55px;" width="16" height="4" viewBox="0 0 16 4"><circle cx="2.2" cy="2" r="1.3" fill="#6d4ef2"/><circle cx="8.2" cy="2" r="1.3" fill="#6d4ef2"/><circle cx="14.2" cy="2" r="1.3" fill="#6d4ef2"/></svg>
</section>
<section class="row">
<div class="hl" style="left:75px;top:1021.95px;width:843px;height:51.8px;"></div>
<div style="left:95px;top:1036.15px;width:4.9px;height:20.7px;background:#2196bf"></div>
<span class="t" style="left:105.5px;top:1037.85px;font-size:15.4px;letter-spacing:0.151px;">api</span>
<span class="t" style="left:234.8px;top:1037.85px;font-size:15.4px;letter-spacing:-0.057px;">Info...</span>
<span class="t" style="left:307.5px;top:1037.85px;font-size:15.4px;letter-spacing:-0.410px;">15:44:01....</span>
<span class="t" style="left:416.2px;top:1037.85px;font-size:15.4px;letter-spacing:0.063px;">Executed endpoint 'Health checks'</span>
<span class="t" style="left:777.9px;top:1037.85px;font-size:15.4px;letter-spacing:0.531px;"><a>fbd</a></span>
<span class="t" style="left:801.5px;top:1037.85px;font-size:15.4px;letter-spacing:-0.743px;">...</span>
<svg style="left:860px;top:1045.35px;" width="16" height="4" viewBox="0 0 16 4"><circle cx="2.2" cy="2" r="1.3" fill="#6d4ef2"/><circle cx="8.2" cy="2" r="1.3" fill="#6d4ef2"/><circle cx="14.2" cy="2" r="1.3" fill="#6d4ef2"/></svg>
</section>
<div style="left:75px;top:168px;width:860px;height:48.5px;background:#f7f7f7;border-bottom:1px solid #dedede;z-index:2"></div>
<div style="left:208.2px;top:173px;width:1px;height:36px;background:#e2e2e2;z-index:3"></div>
<div style="left:281.1px;top:173px;width:1px;height:36px;background:#e2e2e2;z-index:3"></div>
<div style="left:390.1px;top:173px;width:1px;height:36px;background:#e2e2e2;z-index:3"></div>
<div style="left:751.9px;top:173px;width:1px;height:36px;background:#e2e2e2;z-index:3"></div>
<div style="left:825.1px;top:173px;width:1px;height:36px;background:#e2e2e2;z-index:3"></div>
<div style="left:906.9px;top:173px;width:1px;height:36px;background:#e2e2e2;z-index:3"></div>
<span class="t" style="left:96px;top:182.0px;font-size:15.4px;-webkit-text-stroke:0.49px;z-index:3;letter-spacing:-0.197px;">Resource</span>
<span class="t" style="left:233.8px;top:182.0px;font-size:15.4px;-webkit-text-stroke:0.49px;z-index:3;letter-spacing:-0.648px;">L...</span>
<span class="t" style="left:306.2px;top:182.0px;font-size:15.4px;-webkit-text-stroke:0.49px;z-index:3;letter-spacing:-0.107px;">Times...</span>
<span class="t" style="left:414.4px;top:182.0px;font-size:15.4px;-webkit-text-stroke:0.49px;z-index:3;letter-spacing:-0.022px;">Message</span>
<span class="t" style="left:777.2px;top:182.0px;font-size:15.4px;-webkit-text-stroke:0.49px;z-index:3;letter-spacing:-0.358px;">T...</span>
<span class="t" style="left:849.6px;top:182.0px;font-size:15.4px;-webkit-text-stroke:0.49px;z-index:3;letter-spacing:-0.198px;">A...</span>
<div style="left:918px;top:168px;width:19px;height:884px;background:#f7f7f7;z-index:3"></div>
<svg style="left:921px;top:174px;z-index:4" width="13" height="10" viewBox="0 0 13 10"><path d="M6.5 1L12 8.6H1Z" fill="#8b8b8b" stroke="#8b8b8b" stroke-width="1.4" stroke-linejoin="round"/></svg>
<div style="left:922px;top:423px;width:11px;height:86px;background:#8b8b8b;border-radius:5.5px;z-index:4"></div>
<div style="left:937px;top:168px;width:6.2px;height:884px;background:#cfcfcf"></div>
</section>
<aside>
<div style="left:943.2px;top:168px;width:846.8px;height:54px;background:#e4e4e4"></div>
<span class="t" style="left:956.5px;top:185.8px;font-size:17px;font-weight:700;letter-spacing:0.339px;">Log entry details</span>
<span class="t" style="left:1112.9px;top:187.3px;font-size:13.5px;font-weight:700;color:#4a4a4a;letter-spacing:-0.132px;">Microsoft.AspNetCore.Hosting.Diagnostics</span>
<svg style="left:1724.5px;top:186.5px;" width="17" height="16" viewBox="0 0 17 16"><path d="M0.8 8h15.4M3.6 5.6V3.6a2.3 2.3 0 0 1 2.3-2.3h5.2a2.3 2.3 0 0 1 2.3 2.3v2M3.6 10.4v2a2.3 2.3 0 0 0 2.3 2.3h5.2a2.3 2.3 0 0 0 2.3-2.3v-2" fill="none" stroke="#6d4ef2" stroke-width="1.3" stroke-linecap="round"/></svg>
<svg style="left:1767.5px;top:188.3px;" width="13" height="13" viewBox="0 0 13 13"><path d="M0.8 0.8l11.4 11.4M12.2 0.8L0.8 12.2" stroke="#6d4ef2" stroke-width="1.3" stroke-linecap="round"/></svg>
<span class="t" style="left:952.3px;top:234.8px;font-size:15.4px;letter-spacing:-0.559px;">Resource</span>
<span class="t" style="left:1019.3px;top:234.8px;font-size:15.4px;font-weight:700;letter-spacing:0.050px;">api</span>
<span class="t" style="left:1061.3px;top:234.8px;font-size:15.4px;letter-spacing:-0.027px;">Timestamp</span>
<span class="t" style="left:1142.9px;top:234.8px;font-size:15.4px;font-weight:700;letter-spacing:0.078px;">15:42:31.097</span>
<div class="in inb" style="left:1522px;top:227px;width:290px;height:34.4px;"></div>
<svg style="left:1537px;top:236.2px;" width="16.4" height="16.4" viewBox="0 0 16.4 16.4"><circle cx="6.6" cy="6.6" r="5.6" fill="none" stroke="#1a1a1a" stroke-width="1.4"/><path d="M10.8 10.8l4.9 4.9" stroke="#1a1a1a" stroke-width="1.4" stroke-linecap="round"/></svg>
<span class="t" style="left:1568.4px;top:235.0px;font-size:15.4px;color:#6e6e6e;letter-spacing:-0.243px;">Filter...</span>
<div style="left:947.2px;top:271.2px;width:834.8px;height:800px;background:#fbfbfb;border:1px solid #e9e9e9;border-radius:7px"></div>
<div style="left:948.2px;top:326px;width:832.1px;height:1px;background:#e8e8e8"></div>
<span class="t" style="left:966.4px;top:289.8px;font-size:17.5px;-webkit-text-stroke:0.21px;letter-spacing:0.515px;">Log entry</span>
<div style="left:1703.1px;top:287.8px;width:23.8px;height:22.2px;background:#eaeaea;border-radius:11.5px"></div>
<span class="t" style="left:1708.4px;top:290.0px;font-size:13px;letter-spacing:-0.434px;">16</span>
<svg style="left:1748.5px;top:295.8px;" width="10.4" height="6.4" viewBox="0 0 10.4 6.4"><path d="M1 5.4l4.2-4.2 4.2 4.2" fill="none" stroke="#1a1a1a" stroke-width="1.2" stroke-linecap="round" stroke-linejoin="round"/></svg>
<div style="left:1217px;top:342.5px;width:1px;height:35px;background:#e2e2e2"></div>
<div style="left:1760px;top:342px;width:1px;height:35.5px;background:#e2e2e2"></div>
<span class="t" style="left:970.2px;top:351.0px;font-size:15.4px;-webkit-text-stroke:0.49px;letter-spacing:0.059px;">Name</span>
<span class="t" style="left:1242.8px;top:351.0px;font-size:15.4px;-webkit-text-stroke:0.49px;letter-spacing:-0.047px;">Value</span>
<div style="left:957.4px;top:385px;width:814.6px;height:1px;background:#dedede"></div>
<span class="t" style="left:972.2px;top:400.8px;font-size:15.4px;letter-spacing:-0.359px;">Level</span>
<span class="t" style="left:1243.8px;top:400.8px;font-size:15.4px;letter-spacing:0.336px;">Information</span>
<div style="left:957.4px;top:434.4px;width:814.6px;height:1px;background:#e6e6e6"></div>
<span class="t" style="left:972.2px;top:450.32px;font-size:15.4px;letter-spacing:-0.208px;">Message</span>
<span class="t" style="left:1243.8px;top:450.32px;font-size:15.4px;letter-spacing:-0.249px;">Request starting HTTP/1.1 GET</span>
<span class="t" style="left:1459.4px;top:450.32px;font-size:15.4px;letter-spacing:0.294px;"><a>https://localhost:7376/health</a></span>
<span class="t" style="left:1665.5px;top:450.32px;font-size:15.4px;letter-spacing:0.237px;">- null null</span>
<div style="left:957.4px;top:483.9px;width:814.6px;height:1px;background:#e6e6e6"></div>
<span class="t" style="left:972.2px;top:499.84px;font-size:15.4px;letter-spacing:0.191px;">Protocol</span>
<span class="t" style="left:1243.8px;top:499.84px;font-size:15.4px;letter-spacing:-0.482px;">HTTP/1.1</span>
<div style="left:957.4px;top:533.4px;width:814.6px;height:1px;background:#e6e6e6"></div>
<span class="t" style="left:972.2px;top:549.36px;font-size:15.4px;letter-spacing:0.609px;">Method</span>
<span class="t" style="left:1243.8px;top:549.36px;font-size:15.4px;letter-spacing:-1.047px;">GET</span>
<div style="left:957.4px;top:583.0px;width:814.6px;height:1px;background:#e6e6e6"></div>
<span class="t" style="left:972.2px;top:598.88px;font-size:15.4px;letter-spacing:0.065px;">ContentType</span>
<span class="t" style="left:1243.8px;top:598.88px;font-size:15.4px;">-</span>
<div style="left:957.4px;top:632.5px;width:814.6px;height:1px;background:#e6e6e6"></div>
<span class="t" style="left:972.2px;top:648.4px;font-size:15.4px;letter-spacing:0.155px;">ContentLength</span>
<span class="t" style="left:1243.8px;top:648.4px;font-size:15.4px;">-</span>
<div style="left:957.4px;top:682.0px;width:814.6px;height:1px;background:#e6e6e6"></div>
<span class="t" style="left:972.2px;top:697.92px;font-size:15.4px;letter-spacing:-0.411px;">Scheme</span>
<span class="t" style="left:1243.8px;top:697.92px;font-size:15.4px;letter-spacing:0.325px;">https</span>
<div style="left:957.4px;top:731.5px;width:814.6px;height:1px;background:#e6e6e6"></div>
<span class="t" style="left:972.2px;top:747.44px;font-size:15.4px;letter-spacing:0.086px;">Host</span>
<span class="t" style="left:1243.8px;top:747.44px;font-size:15.4px;letter-spacing:-0.019px;">localhost:7376</span>
<div style="left:957.4px;top:781.0px;width:814.6px;height:1px;background:#e6e6e6"></div>
<span class="t" style="left:972.2px;top:796.96px;font-size:15.4px;letter-spacing:-0.594px;">PathBase</span>
<span class="t" style="left:1243.8px;top:796.96px;font-size:15.4px;">-</span>
<div style="left:957.4px;top:830.6px;width:814.6px;height:1px;background:#e6e6e6"></div>
<span class="t" style="left:972.2px;top:846.48px;font-size:15.4px;letter-spacing:-0.418px;">Path</span>
<span class="t" style="left:1243.8px;top:846.48px;font-size:15.4px;letter-spacing:0.397px;">/health</span>
<div style="left:957.4px;top:880.1px;width:814.6px;height:1px;background:#e6e6e6"></div>
<span class="t" style="left:972.2px;top:896.0px;font-size:15.4px;letter-spacing:-0.011px;">QueryString</span>
<span class="t" style="left:1243.8px;top:896.0px;font-size:15.4px;">-</span>
<div style="left:957.4px;top:929.6px;width:814.6px;height:1px;background:#e6e6e6"></div>
<span class="t" style="left:972.2px;top:945.52px;font-size:15.4px;letter-spacing:-0.172px;">EventId</span>
<span class="t" style="left:1243.8px;top:945.52px;font-size:15.4px;letter-spacing:0.014px;">{"Id":1}</span>
<div style="left:957.4px;top:979.1px;width:814.6px;height:1px;background:#e6e6e6"></div>
<span class="t" style="left:972.2px;top:995.04px;font-size:15.4px;letter-spacing:-0.130px;">RequestId</span>
<span class="t" style="left:1243.8px;top:995.04px;font-size:15.4px;letter-spacing:-0.398px;">0HNFVCP3OT24H:00000003</span>
<div style="left:957.4px;top:1028.6px;width:814.6px;height:1px;background:#e6e6e6"></div>
<span class="t" style="left:972.2px;top:1044.56px;font-size:15.4px;letter-spacing:-0.391px;">RequestPath</span>
<span class="t" style="left:1243.8px;top:1044.56px;font-size:15.4px;letter-spacing:0.397px;">/health</span>
<div style="left:957.4px;top:1078.2px;width:814.6px;height:1px;background:#e6e6e6"></div>
</aside>
</main>
</body>
</html>
